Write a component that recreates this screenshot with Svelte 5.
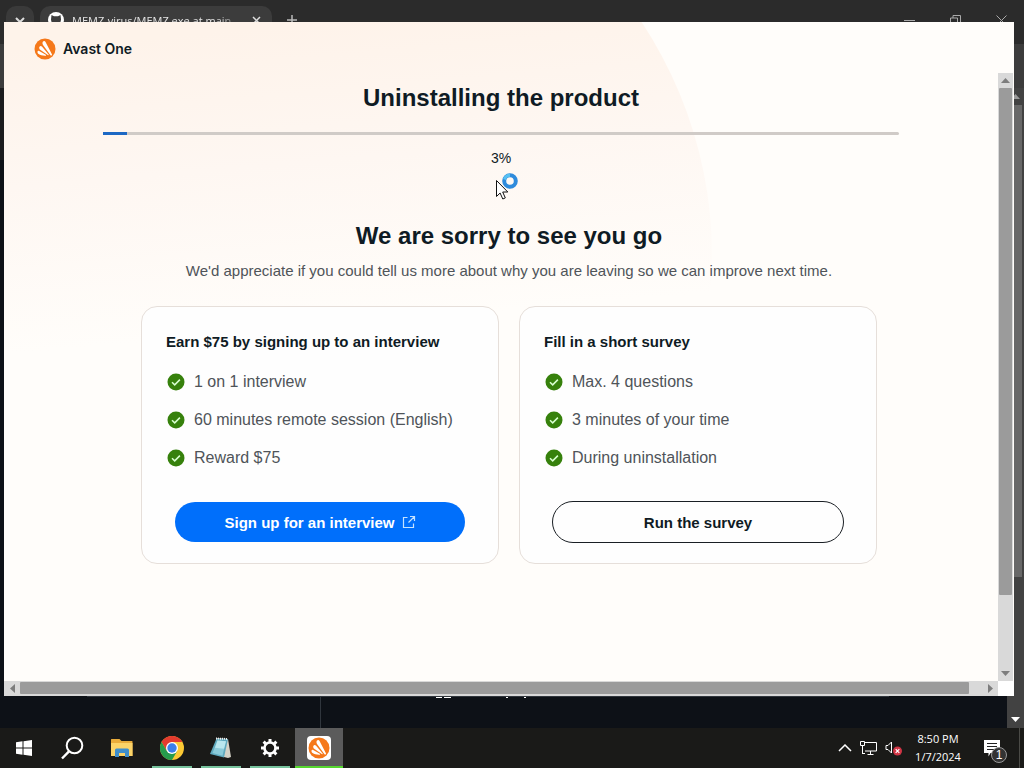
<script>
    let progress = $state(3);

    const cards = [
        {
            title: "Earn $75 by signing up to an interview",
            items: [
                "1 on 1 interview",
                "60 minutes remote session (English)",
                "Reward $75",
            ],
            action: "Sign up for an interview",
            primary: true,
        },
        {
            title: "Fill in a short survey",
            items: [
                "Max. 4 questions",
                "3 minutes of your time",
                "During uninstallation",
            ],
            action: "Run the survey",
            primary: false,
        },
    ];
</script>

{#snippet avastMark(size)}
    <svg width={size} height={size} viewBox="0 0 22 22" aria-hidden="true">
        <circle cx="11" cy="11" r="10.5" fill="#f5781a" />
        <path d="M9 3.600C9.600 2.700 10.900 2.800 11.400 3.700L17.900 16.200C18.300 17.200 17.300 18 16.500 17.200L9.200 7.300C8.300 6 8.300 4.600 9 3.600Z" fill="#fff" />
        <path d="M5.500 8.700C6.100 7.800 7.100 7.800 7.900 8.600L14.600 16.400C14.900 17.100 14.400 17.500 13.800 17.100L6.200 11.800C5.200 10.900 4.900 9.700 5.500 8.700Z" fill="#fff" />
        <path d="M3.600 13.300C3.900 12.600 4.600 12.600 5.200 12.900L11.800 16.700C12.400 17.200 12.100 17.800 11.500 17.800C8.700 17.900 6.300 17.300 4.600 16.100C3.600 15.300 3.300 14.200 3.600 13.300Z" fill="#fff" />
    </svg>
{/snippet}

<div class="screen">
    <main class="desktop">
        <div class="browser">
            <div class="tab-strip">
                <button class="tab-search" aria-label="Search tabs">
                    <svg width="10" height="7" viewBox="0 0 10 7"><path d="M1 1l4 4 4-4" fill="none" stroke="#ddd" stroke-width="2" /></svg>
                </button>
                <div class="tab">
                    <svg width="16" height="16" viewBox="0 0 16 16" aria-hidden="true">
                        <circle cx="8" cy="8" r="8" fill="#fff" />
                        <path d="M3.500 3l2.500 1.300h4L12.500 3l.5 4.500c0 3-2 4.500-5 4.500S3 10.500 3 7.500Z" fill="#3c3c3c" />
                    </svg>
                    <span class="tab-title">MEMZ-virus/MEMZ.exe at main</span>
                    <button class="tab-close" aria-label="Close tab">
                        <svg width="9" height="9" viewBox="0 0 9 9"><path d="M1 1l7 7M8 1L1 8" stroke="#ddd" stroke-width="1.500" /></svg>
                    </button>
                </div>
                <button class="new-tab" aria-label="New tab">
                    <svg width="12" height="12" viewBox="0 0 12 12"><path d="M6 1v10M1 6h10" stroke="#bbb" stroke-width="1.500" /></svg>
                </button>
                <div class="window-buttons">
                    <button aria-label="Minimize">
                        <svg width="11" height="11" viewBox="0 0 11 11"><path d="M0 5.500h11" stroke="#aaa" /></svg>
                    </button>
                    <button aria-label="Restore">
                        <svg width="11" height="11" viewBox="0 0 11 11"><path d="M.5 3h7v7.500h-7ZM3 3V.5h7.500V8H8" fill="none" stroke="#aaa" /></svg>
                    </button>
                    <button aria-label="Close">
                        <svg width="11" height="11" viewBox="0 0 11 11"><path d="M.5.5l10 10M10.500.5l-10 10" stroke="#aaa" /></svg>
                    </button>
                </div>
            </div>
            <div class="toolbar"></div>
            <div class="page">
                <div class="page-header"></div>
                <div class="page-body">
                    <div class="page-rule"></div>
                    <div class="repo-footer">
                        <svg width="92" height="2" viewBox="0 0 92 2" aria-hidden="true">
                            <path d="M0 .5h6M8 .5h7M70 .5h2M88 .5h2" stroke="#fff" />
                        </svg>
                    </div>
                </div>
                <div class="page-scroll">
                    <svg width="9" height="5" viewBox="0 0 9 5" aria-hidden="true"><path d="M0 5h9L4.500 0Z" fill="#999" /></svg>
                    <div class="page-thumb"></div>
                    <svg width="9" height="5" viewBox="0 0 9 5" aria-hidden="true"><path d="M0 0h9L4.500 5Z" fill="#fff" /></svg>
                </div>
            </div>
        </div>

        <section class="app-window">
            <div class="glow"></div>
            <header class="title-bar">
                {@render avastMark(22)}
                <span>Avast One</span>
            </header>

            <div class="viewport">
                <div class="progress-block">
                    <h1>Uninstalling the product</h1>
                    <div
                        class="progress"
                        role="progressbar"
                        aria-label="Uninstalling the product"
                        aria-valuenow={progress}
                        aria-valuemin="0"
                        aria-valuemax="100"
                    >
                        <div class="progress-fill" style="width: {progress}%"></div>
                    </div>
                    <p class="percent">{progress}%</p>
                    <svg class="pointer" width="24" height="28" viewBox="0 0 24 28" aria-hidden="true">
                        <circle cx="15" cy="9" r="5.800" fill="none" stroke="#2f8bdc" stroke-width="4" />
                        <path d="M9.500 7.500A5.800 5.800 0 0 1 15 3.200" fill="none" stroke="#57c0f2" stroke-width="3" />
                        <path d="M1.500 8.500v16l3.600-3.500 2.700 6 2.500-1.100-2.600-5.900h5.100Z" fill="#fff" stroke="#111" />
                    </svg>
                </div>

                <div class="feedback">
                    <h2>We are sorry to see you go</h2>
                    <p class="lead">
                        We'd appreciate if you could tell us more about why you are leaving so we can improve next time.
                    </p>
                    <div class="cards">
                        {#each cards as card}
                            <article class="card">
                                <h3>{card.title}</h3>
                                <ul>
                                    {#each card.items as item}
                                        <li>
                                            <svg width="18" height="18" viewBox="0 0 18 18" aria-hidden="true">
                                                <circle cx="9" cy="9" r="8.500" fill="#36810c" />
                                                <path d="M5 9.300l2.700 2.600 5.200-5.300" fill="none" stroke="#d8ffd0" stroke-width="1.500" />
                                            </svg>
                                            {item}
                                        </li>
                                    {/each}
                                </ul>
                                <button class="action" class:primary={card.primary}>
                                    {card.action}
                                    {#if card.primary}
                                        <svg width="14" height="14" viewBox="0 0 14 14" aria-hidden="true">
                                            <path d="M5.500 2.500H1.500v10h10V8.500M8 1.500h4.500V6M12.500 1.500L6.500 7.500" fill="none" stroke="#c4e2ff" stroke-width="1.200" />
                                        </svg>
                                    {/if}
                                </button>
                            </article>
                        {/each}
                    </div>
                </div>
            </div>

            <div class="scroll-y">
                <button aria-label="Scroll up">
                    <svg width="9" height="5" viewBox="0 0 9 5"><path d="M0 5h9L4.500 0Z" fill="#7d7d7d" /></svg>
                </button>
                <div class="track"><div class="thumb"></div></div>
                <button aria-label="Scroll down">
                    <svg width="9" height="5" viewBox="0 0 9 5"><path d="M0 0h9L4.500 5Z" fill="#7d7d7d" /></svg>
                </button>
            </div>
            <div class="scroll-x">
                <button aria-label="Scroll left">
                    <svg width="5" height="9" viewBox="0 0 5 9"><path d="M5 0v9L0 4.500Z" fill="#7d7d7d" /></svg>
                </button>
                <div class="track"><div class="thumb"></div></div>
                <button aria-label="Scroll right">
                    <svg width="5" height="9" viewBox="0 0 5 9"><path d="M0 0v9L5 4.500Z" fill="#7d7d7d" /></svg>
                </button>
            </div>
            <div class="corner"></div>
        </section>
    </main>

    <footer class="taskbar">
        <button aria-label="Start">
            <svg width="16" height="16" viewBox="0 0 16 16"><path d="M0 2.200l6.500-.9v6.200H0ZM7.500 1.200L16 0v7.500H7.500ZM0 8.500h6.500v6.200L0 13.800ZM7.500 8.500H16V16l-8.500-1.200Z" fill="#fff" /></svg>
        </button>
        <button aria-label="Search">
            <svg width="24" height="24" viewBox="0 0 24 24"><circle cx="13.500" cy="9.500" r="7.800" fill="none" stroke="#fff" stroke-width="2" /><path d="M8 15.300L1 22.500" stroke="#fff" stroke-width="2.400" /></svg>
        </button>
        <button aria-label="File Explorer">
            <svg width="22" height="20" viewBox="0 0 22 20">
                <path d="M0 1.500Q0 1 .5 1h8l2 2H21q.5 0 .5.500V18H0Z" fill="#e9ac3b" />
                <path d="M0 5h21.500v13H0Z" fill="#fbd368" />
                <path d="M4 19v-7q0-1.500 1.500-1.500h11q1.500 0 1.500 1.500v7h-4v-4H8v4Z" fill="#3f8ecb" />
            </svg>
        </button>
        <button class="running" aria-label="Google Chrome">
            <svg width="24" height="24" viewBox="0 0 24 24">
                <circle cx="12" cy="12" r="12" fill="#fcc934" />
                <path d="M12 6h10.400A12 12 0 0 0 1.600 6l5.200 9Z" fill="#e33b2e" />
                <path d="M1.600 6A12 12 0 0 0 12 24l5.200-9L12 17.500 6.800 15Z" fill="#269c4c" />
                <circle cx="12" cy="12" r="6" fill="#fff" />
                <circle cx="12" cy="12" r="4.700" fill="#3b7fea" />
            </svg>
        </button>
        <button class="running" aria-label="Notepad">
            <svg width="24" height="24" viewBox="0 0 24 24">
                <path d="M7 2l12 1 3 18-3 1-4-1Z" fill="#d5d2c6" />
                <path d="M7.500 2.500L19 3l-4 18.500L1 18Z" fill="#5fa9bd" />
                <path d="M8.500 4.500l8.500.7-3.500 14.500L3.500 17Z" fill="#8bcbd9" />
                <path d="M8.500 4.500l8.500.7-2 7.500-9-1Z" fill="#b9e7ee" />
                <path d="M7 2.500l12 .5" stroke="#eee" stroke-width="2" stroke-dasharray="1 1" />
            </svg>
        </button>
        <button class="running" aria-label="Settings">
            <svg width="20" height="20" viewBox="0 0 20 20">
                <circle cx="10" cy="10" r="5.500" fill="none" stroke="#fff" stroke-width="2.600" />
                <path d="M10 1v3.500M10 15.500V19M1 10h3.500M15.500 10H19M3.600 3.600l2.400 2.400M14 14l2.400 2.400M3.600 16.400L6 14M14 6l2.400-2.400" stroke="#fff" stroke-width="3" />
            </svg>
        </button>
        <button class="running active" aria-label="Avast One">
            <span class="app-tile">{@render avastMark(22)}</span>
        </button>

        <div class="tray">
            <button aria-label="Show hidden icons">
                <svg width="14" height="8" viewBox="0 0 14 8"><path d="M1 7l6-6 6 6" fill="none" stroke="#fff" stroke-width="1.500" /></svg>
            </button>
            <button aria-label="Network">
                <svg width="17" height="14" viewBox="0 0 17 14"><path d="M5 1.500h11.500v8.500H5M.5.500h4v4h-4ZM2.500 4.500v8M2 12.500h3M10.500 10v3M7.500 13.500h6" fill="none" stroke="#fff" /></svg>
            </button>
            <button aria-label="Volume muted">
                <svg width="18" height="16" viewBox="0 0 18 16">
                    <path d="M1 5.500h2l3.500-3.500v11L3 9.500H1Z" fill="none" stroke="#fff" />
                    <circle cx="12.500" cy="11" r="4.500" fill="#d13545" />
                    <path d="M10.700 9.200l3.600 3.600M14.300 9.200l-3.600 3.600" stroke="#fff" stroke-width="1.200" />
                </svg>
            </button>
            <div class="clock">
                <time>8:50 PM</time>
                <time>1/7/2024</time>
            </div>
            <button class="notifications" aria-label="1 new notification">
                <svg width="17" height="17" viewBox="0 0 17 17"><path d="M0 0h16v13H6.500L4.500 16.500V13H0Z" fill="#fff" /><path d="M3 3.500h10M3 6.500h10M3 9.500h7" stroke="#222" /></svg>
                <span class="badge">1</span>
            </button>
        </div>
    </footer>
</div>

<style>
    :global(body) {
        margin: 0;
        background: #0d1117;
    }

    .screen {
        display: flex;
        flex-direction: column;
        min-height: 100vh;
        font-family: "Liberation Sans", Arial, sans-serif;
        color: #0f1b24;
    }

    button {
        display: flex;
        align-items: center;
        justify-content: center;
        padding: 0;
        border: 0;
        background: none;
        font-family: inherit;
    }

    h1,
    h2,
    h3,
    p,
    ul {
        margin: 0;
        padding: 0;
    }

    .desktop {
        flex: 1;
        display: grid;
        grid-template-columns: minmax(0, 1fr);
        overflow: hidden;
    }

    .browser,
    .app-window {
        grid-area: 1 / 1;
    }

    /* browser behind the uninstaller */
    .browser {
        display: flex;
        flex-direction: column;
        background: #2b2b2b;
    }

    .tab-strip {
        display: flex;
        height: 44px;
        padding: 6px 0 0 6px;
        box-sizing: border-box;
    }

    .tab-search {
        width: 28px;
        height: 28px;
        border-radius: 10px;
        background: #3a3a3a;
    }

    .tab {
        display: flex;
        align-items: center;
        gap: 8px;
        width: 232px;
        height: 28px;
        margin-left: 6px;
        padding: 0 10px 0 8px;
        box-sizing: border-box;
        border-radius: 10px 10px 0 0;
        background: #3c3c3c;
        color: #e3e3e3;
        font-family: "Open Sans", sans-serif;
        font-size: 11px;
    }

    .tab-title {
        flex: 1;
        overflow: hidden;
        white-space: nowrap;
        mask-image: linear-gradient(90deg, #000 85%, transparent);
    }

    .tab-close {
        width: 12px;
    }

    .new-tab {
        width: 40px;
        height: 28px;
    }

    .window-buttons {
        display: flex;
        height: 28px;
        margin-left: auto;
    }

    .window-buttons button {
        width: 46px;
    }

    .toolbar {
        height: 44px;
        background: #3c3c3c;
    }

    .page {
        flex: 1;
        display: grid;
        grid-template-columns: 1fr 17px;
        grid-template-rows: 72px 1fr;
        background: #0d1117;
    }

    .page-header {
        background: #1c1c1e;
    }

    .page-body {
        grid-row: 2;
        display: flex;
        flex-direction: column;
        justify-content: flex-end;
    }

    .repo-footer {
        height: 31px;
        margin-left: 320px;
        padding-left: 115px;
        border-left: 1px solid #30363d;
    }

    .repo-footer svg {
        display: block;
    }

    .page-rule {
        height: 1px;
        margin: 0 118px 0 87px;
        background: #30363d;
    }

    .page-scroll {
        grid-column: 2;
        grid-row: 1 / 3;
        display: flex;
        flex-direction: column;
        align-items: center;
        gap: 6px;
        padding: 6px 0;
        background: #424242;
    }

    .page-thumb {
        flex: 1;
        width: 13px;
        margin-bottom: 134px;
        background: #686868;
    }

    /* uninstaller window */
    .app-window {
        position: relative;
        display: grid;
        grid-template-columns: minmax(0, 1fr) 16px;
        grid-template-rows: 51px 1fr 15px;
        margin: 22px 10px 32px 4px;
        overflow: hidden;
        background: #fffdfa;
    }

    .glow {
        position: absolute;
        top: -190px;
        left: -140px;
        width: 848px;
        height: 848px;
        border-radius: 50%;
        background: linear-gradient(175deg, #fef3ea 25%, #fef7f2 40%, #fffdfa 58%);
    }

    .title-bar {
        position: relative;
        grid-column: 1 / 3;
        display: flex;
        align-items: center;
        gap: 7px;
        padding: 2px 30px 0;
        font-family: Inter, sans-serif;
        font-size: 14px;
        font-weight: 600;
    }

    .viewport {
        position: relative;
        overflow: hidden;
    }

    .progress-block {
        position: relative;
        text-align: center;
    }

    h1,
    h2 {
        font-size: 24px;
        line-height: 32px;
    }

    h1 {
        padding-top: 9px;
    }

    .progress {
        width: 80%;
        height: 3px;
        margin: 18px auto 0;
        border-radius: 2px;
        background: #d0cbc7;
    }

    .progress-fill {
        height: 100%;
        background: #1d68c4;
    }

    .percent {
        margin-top: 13px;
        font-size: 14px;
        line-height: 20px;
    }

    .pointer {
        position: absolute;
        top: 99px;
        left: calc(50% - 6px);
    }

    .feedback {
        /* the form is laid out wider than the visible area */
        width: calc(100% + 16px);
        margin-top: 52px;
        text-align: center;
    }

    .lead {
        margin-top: 8px;
        font-size: 15px;
        line-height: 22px;
        color: #4f5459;
    }

    .cards {
        display: flex;
        justify-content: center;
        gap: 20px;
        margin-top: 24px;
    }

    .card {
        flex: 0 1 358px;
        box-sizing: border-box;
        padding: 24px 24px 20px;
        border: 1px solid #e6dfda;
        border-radius: 16px;
        background: #fefefe;
        text-align: left;
    }

    h3 {
        font-size: 15px;
        line-height: 22px;
    }

    ul {
        display: flex;
        flex-direction: column;
        gap: 16px;
        margin-top: 18px;
        list-style: none;
    }

    li {
        display: flex;
        align-items: center;
        gap: 9px;
        padding-left: 1px;
        font-size: 16px;
        line-height: 22px;
        color: #4f5459;
    }

    .action {
        gap: 7px;
        width: 292px;
        max-width: 100%;
        height: 42px;
        margin: 32px auto 0;
        border: 1px solid #1a1f24;
        border-radius: 21px;
        color: #0f1b24;
        font-size: 15px;
        font-weight: 700;
    }

    .action.primary {
        border-color: transparent;
        background: #006ffb;
        background-clip: padding-box;
        color: #fff;
    }

    .scroll-y,
    .scroll-x {
        position: relative;
        display: flex;
        background: #d9d9d9;
    }

    .scroll-y {
        flex-direction: column;
        margin-right: 1px;
    }

    .scroll-y button {
        height: 15px;
    }

    .scroll-x button {
        width: 16px;
    }

    .track {
        flex: 1;
        display: flex;
    }

    .thumb {
        border-radius: 1px;
        background: #9b9b9b;
    }

    .scroll-y .thumb {
        width: 13px;
        height: calc(100% - 71px);
        margin: 0 1px;
    }

    .scroll-x .thumb {
        width: calc(100% - 13px);
        height: 12px;
        margin: 1px 0;
    }

    .corner {
        position: relative;
        background: #fff;
    }

    /* taskbar */
    .taskbar {
        display: flex;
        gap: 1px;
        height: 40px;
        background: #1a1a18;
        color: #fff;
    }

    .taskbar > button {
        width: 48px;
        border-top: 2px solid transparent;
        border-bottom: 2px solid transparent;
    }

    .taskbar > .running {
        background: linear-gradient(#76c29c, #76c29c) center bottom / 40px 2px no-repeat border-box;
    }

    .taskbar > button:nth-child(3) {
        margin-right: 1px;
    }

    .taskbar > .active {
        background: #5b5b5b;
        border-top-color: #5b5b5b;
        border-bottom-color: #55d62f;
    }

    .app-tile {
        display: flex;
        padding: 1px;
        border-radius: 4px;
        background: #fff;
    }

    .tray {
        display: flex;
        align-items: center;
        gap: 8px;
        margin-left: auto;
        margin-right: 4px;
        border-right: 1px solid #4a4a46;
    }

    .clock {
        display: flex;
        flex-direction: column;
        align-items: center;
        width: 54px;
        font-family: "Open Sans", sans-serif;
        font-size: 11px;
        line-height: 18px;
    }

    .notifications {
        position: relative;
        width: 38px;
        height: 40px;
        margin-right: 8px;
    }

    .badge {
        position: absolute;
        right: 4px;
        bottom: 5px;
        width: 14px;
        border: 1px solid #999;
        border-radius: 50%;
        background: #333;
        font-size: 12px;
        line-height: 14px;
        text-align: center;
        color: #fff;
    }
</style>
